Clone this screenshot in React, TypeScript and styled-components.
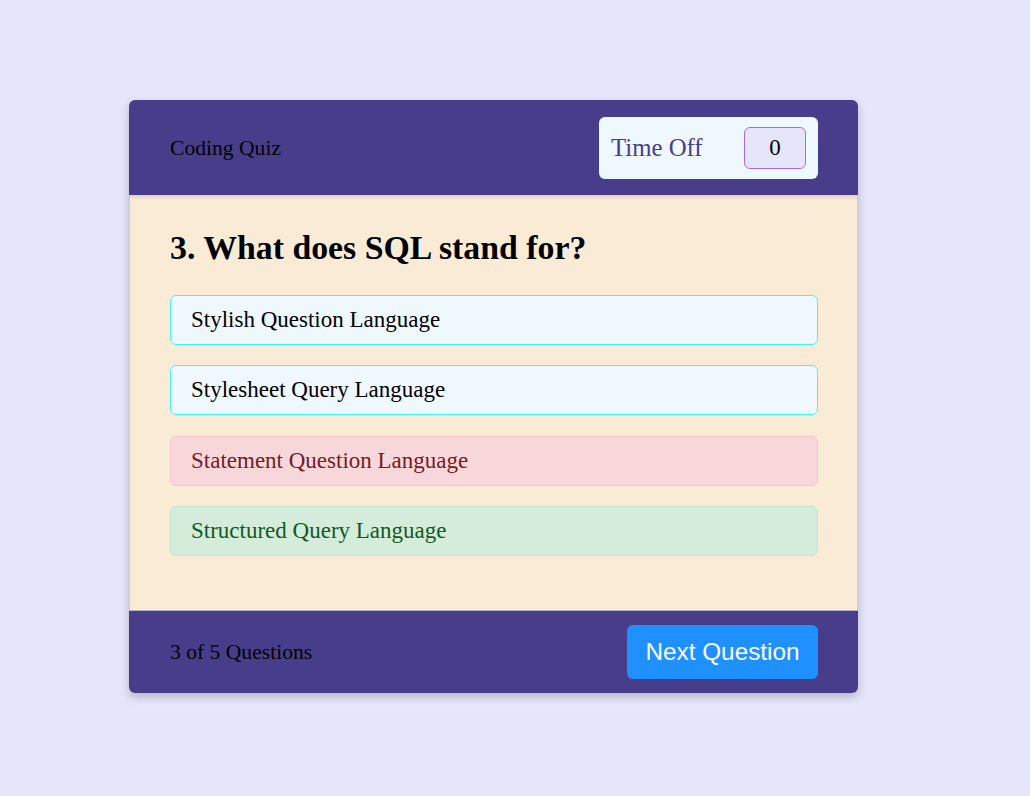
import React from "react";
import styled, { createGlobalStyle } from "styled-components";

const Global = createGlobalStyle`
  html, body { margin: 0; padding: 0; }
  body {
    background: #e6e6fa;
    font-family: "Liberation Serif", "Times New Roman", serif;
    min-height: 796px;
  }
`;

const Page = styled.div`
  padding: 100px 0 0 129px;
`;

const Card = styled.div`
  width: 729px;
  border-radius: 6px;
  overflow: hidden;
  background: #faebd7;
  box-shadow: 0 4px 10px rgba(0, 0, 0, 0.22);
`;

const Header = styled.div`
  display: flex;
  align-items: center;
  justify-content: space-between;
  background: #483d8b;
  padding: 17px 40px 16px 41px;
  box-shadow: 0 2px 4px rgba(0, 0, 0, 0.12);
  position: relative;
`;

const Title = styled.div`
  font-size: 21.6px;
  color: #000;
`;

const TimerBox = styled.div`
  display: flex;
  align-items: center;
  justify-content: space-between;
  width: 219px;
  height: 62px;
  box-sizing: border-box;
  padding: 0 12px;
  background: #f0f8ff;
  border-radius: 6px;
`;

const TimerLabel = styled.span`
  font-size: 24.8px;
  color: #483d8b;
`;

const TimerValue = styled.div`
  width: 62px;
  height: 42px;
  box-sizing: border-box;
  border: 1px solid #a66cf0;
  border-radius: 6px;
  background: #e6e6fa;
  display: flex;
  align-items: center;
  justify-content: center;
  font-size: 23px;
  color: #000;
`;

const Body = styled.div`
  padding: 34px 39px 34px 40px;
  border-left: 1px solid rgba(0, 0, 0, 0.12);
  border-right: 1px solid rgba(0, 0, 0, 0.12);
`;

const Question = styled.h1`
  margin: 0 0 28px 0;
  font-size: 33.8px;
  font-weight: bold;
  line-height: 38px;
  color: #000;
`;

const variants = {
  plain: { bg: "#f0f8ff", border: "#40f5ef", color: "#000" },
  wrong: { bg: "#f8d7da", border: "#f5c6cb", color: "#721c24" },
  right: { bg: "#d4edda", border: "#c3e6cb", color: "#155724" },
};

const Option = styled.div<{ $kind: keyof typeof variants }>`
  height: 50px;
  box-sizing: border-box;
  display: flex;
  align-items: center;
  padding: 0 20px;
  margin-bottom: 20.4px;
  border-radius: 6px;
  font-size: 23px;
  background: ${(p) => variants[p.$kind].bg};
  border: 1px solid ${(p) => variants[p.$kind].border};
  color: ${(p) => variants[p.$kind].color};
  &:last-child { margin-bottom: 20px; }
`;

const Footer = styled.div`
  display: flex;
  align-items: center;
  justify-content: space-between;
  background: #483d8b;
  border-top: 1px solid #b9aec4;
  padding: 14px 40px 14px 41px;
`;

const Count = styled.div`
  font-size: 21.6px;
  color: #000;
`;

const NextButton = styled.button`
  width: 191px;
  height: 54px;
  border: none;
  border-radius: 6px;
  background: #1e90ff;
  color: #fff;
  font-family: "Liberation Sans", Arial, sans-serif;
  font-size: 24.3px;
  padding: 0;
  cursor: pointer;
`;

const options: { text: string; kind: keyof typeof variants }[] = [
  { text: "Stylish Question Language", kind: "plain" },
  { text: "Stylesheet Query Language", kind: "plain" },
  { text: "Statement Question Language", kind: "wrong" },
  { text: "Structured Query Language", kind: "right" },
];

export default function App() {
  return (
    <>
      <Global />
      <Page>
        <Card>
          <Header>
            <Title>Coding Quiz</Title>
            <TimerBox>
              <TimerLabel>Time Off</TimerLabel>
              <TimerValue>0</TimerValue>
            </TimerBox>
          </Header>
          <Body>
            <Question>3. What does SQL stand for?</Question>
            {options.map((o) => (
              <Option key={o.text} $kind={o.kind}>
                {o.text}
              </Option>
            ))}
          </Body>
          <Footer>
            <Count>3 of 5 Questions</Count>
            <NextButton>Next Question</NextButton>
          </Footer>
        </Card>
      </Page>
    </>
  );
}
